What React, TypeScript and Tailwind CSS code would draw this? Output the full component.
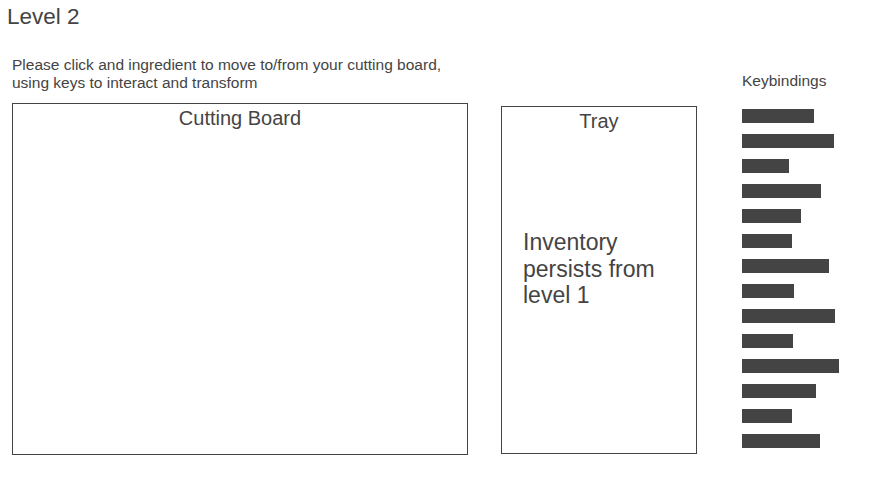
import React from "react";

const bars = [72, 92, 47, 79, 59, 50, 87, 52, 93, 51, 97, 74, 50, 78];

export default function App() {
  return (
    <div className="w-[876px] h-[487px] bg-white font-['Liberation_Sans',Arial,sans-serif] text-[#444444] overflow-hidden">
      <h1 className="pl-[7px] pt-[4px] text-[22.5px] leading-[26px] font-normal">Level 2</h1>
      <div className="mt-[26px] flex items-start">
        <div className="ml-[12px] w-[456px]">
          <p className="text-[15.5px] leading-[18px] whitespace-nowrap">
            Please click and ingredient to move to/from your cutting board,
            <br />
            using keys to interact and transform
          </p>
          <div className="mt-[11px] h-[352px] border border-[#444444] pt-[2px] text-center text-[20px] leading-[24px]">
            Cutting Board
          </div>
        </div>
        <div className="ml-[33px] mt-[50px] w-[196px] h-[348px] border border-[#444444]">
          <div className="pt-[3px] text-center text-[20px] leading-[23px]">Tray</div>
          <p className="mt-[96px] pl-[21px] text-[23px] leading-[26.5px]">
            Inventory
            <br />
            persists from
            <br />
            level 1
          </p>
        </div>
        <div className="ml-[45px] mt-[16px]">
          <div className="text-[15.5px] leading-[18px]">Keybindings</div>
          <div className="mt-[19px] flex flex-col gap-[11px]">
            {bars.map((w, i) => (
              <div key={i} className="h-[14px] bg-[#444444]" style={{ width: w }} />
            ))}
          </div>
        </div>
      </div>
    </div>
  );
}
